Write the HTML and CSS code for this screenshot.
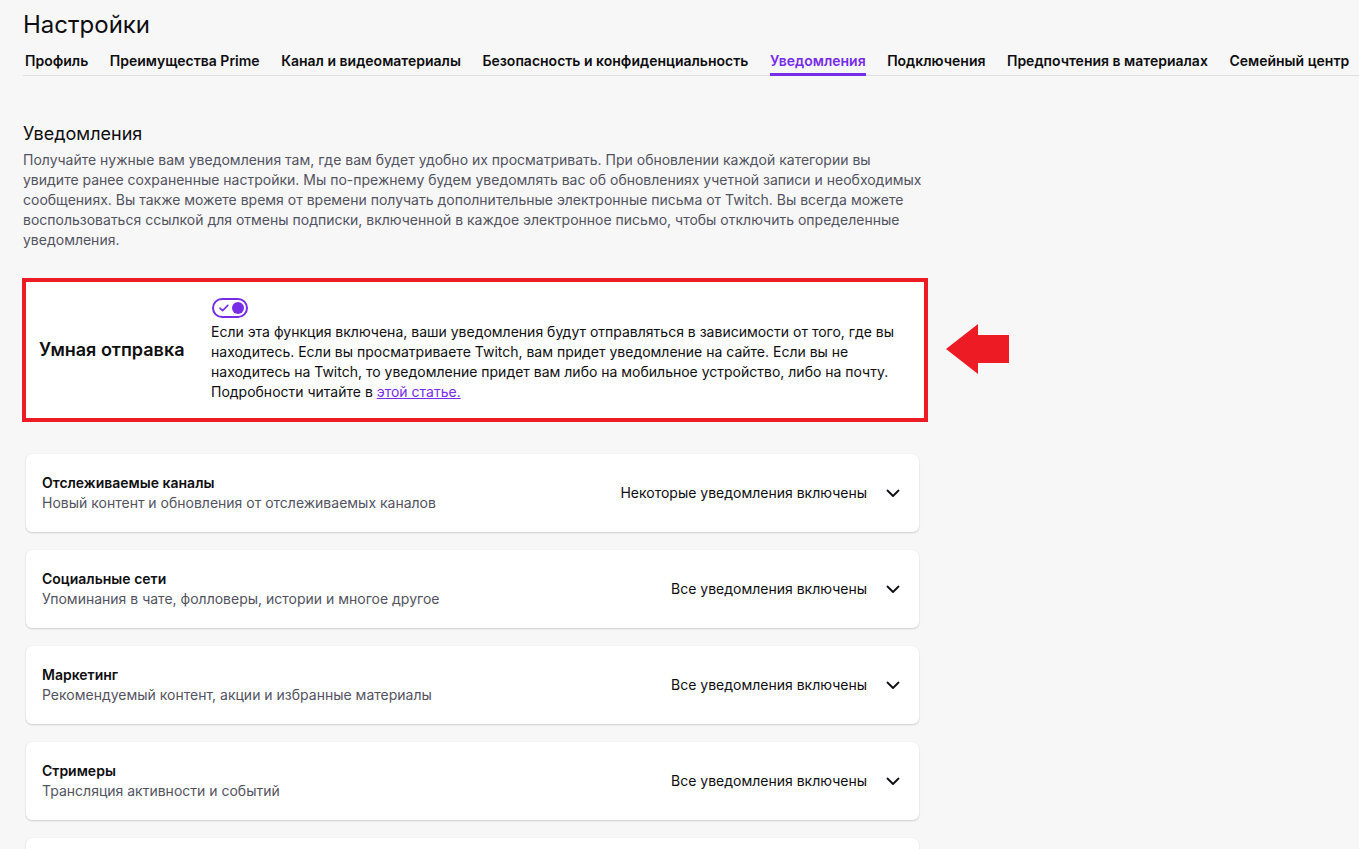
FILE: index.html
```html
<!DOCTYPE html>
<html lang="ru">
<head>
<meta charset="utf-8">
<title>Настройки</title>
<link rel="stylesheet" href="styles.css">
</head>
<body>
<div class="page">
  <h1 class="title">Настройки</h1>
  <nav class="tabs">
    <a class="tab">Профиль</a>
    <a class="tab">Преимущества Prime</a>
    <a class="tab">Канал и видеоматериалы</a>
    <a class="tab">Безопасность и конфиденциальность</a>
    <a class="tab active">Уведомления</a>
    <a class="tab">Подключения</a>
    <a class="tab">Предпочтения в материалах</a>
    <a class="tab">Семейный центр</a>
  </nav>

  <main class="content">
    <h2 class="section-title">Уведомления</h2>
    <p class="intro">Получайте нужные вам уведомления там, где вам будет удобно их просматривать. При обновлении каждой категории вы увидите ранее сохраненные настройки. Мы по-прежнему будем уведомлять вас об обновлениях учетной записи и необходимых сообщениях. Вы также можете время от времени получать дополнительные электронные письма от Twitch. Вы всегда можете воспользоваться ссылкой для отмены подписки, включенной в каждое электронное письмо, чтобы отключить определенные уведомления.</p>

    <div class="smart-wrap">
      <section class="smart">
        <div class="smart-label">Умная отправка</div>
        <div class="smart-body">
          <span class="toggle">
            <svg class="toggle-check" width="10" height="8" viewBox="0 0 10 8"><path d="M1 4.2 L3.6 6.6 L8.8 1.4" fill="none" stroke="#772ce8" stroke-width="1.6" stroke-linecap="round" stroke-linejoin="round"/></svg>
            <span class="toggle-knob"></span>
          </span>
          <p class="smart-text">Если эта функция включена, ваши уведомления будут отправляться в зависимости от того, где вы находитесь. Если вы просматриваете Twitch, вам придет уведомление на сайте. Если вы не находитесь на Twitch, то уведомление придет вам либо на мобильное устройство, либо на почту. Подробности читайте в <a class="link" href="#">этой статье.</a></p>
        </div>
      </section>
      <svg class="arrow" width="64" height="52" viewBox="0 0 64 52"><path d="M0 26 L32 1 L32 12 L63 12 L63 40 L32 40 L32 51 Z" fill="#ed1c24"/></svg>
    </div>

    <div class="cards">
      <div class="card">
        <div class="card-text">
          <div class="card-title">Отслеживаемые каналы</div>
          <div class="card-sub">Новый контент и обновления от отслеживаемых каналов</div>
        </div>
        <div class="card-status">Некоторые уведомления включены</div>
        <svg class="chev" width="20" height="20" viewBox="0 0 20 20"><path d="M4.5 7.5 L10 13 L15.5 7.5" fill="none" stroke="#0e0e10" stroke-width="1.8" stroke-linecap="round" stroke-linejoin="round"/></svg>
      </div>
      <div class="card">
        <div class="card-text">
          <div class="card-title">Социальные сети</div>
          <div class="card-sub">Упоминания в чате, фолловеры, истории и многое другое</div>
        </div>
        <div class="card-status">Все уведомления включены</div>
        <svg class="chev" width="20" height="20" viewBox="0 0 20 20"><path d="M4.5 7.5 L10 13 L15.5 7.5" fill="none" stroke="#0e0e10" stroke-width="1.8" stroke-linecap="round" stroke-linejoin="round"/></svg>
      </div>
      <div class="card">
        <div class="card-text">
          <div class="card-title">Маркетинг</div>
          <div class="card-sub">Рекомендуемый контент, акции и избранные материалы</div>
        </div>
        <div class="card-status">Все уведомления включены</div>
        <svg class="chev" width="20" height="20" viewBox="0 0 20 20"><path d="M4.5 7.5 L10 13 L15.5 7.5" fill="none" stroke="#0e0e10" stroke-width="1.8" stroke-linecap="round" stroke-linejoin="round"/></svg>
      </div>
      <div class="card">
        <div class="card-text">
          <div class="card-title">Стримеры</div>
          <div class="card-sub">Трансляция активности и событий</div>
        </div>
        <div class="card-status">Все уведомления включены</div>
        <svg class="chev" width="20" height="20" viewBox="0 0 20 20"><path d="M4.5 7.5 L10 13 L15.5 7.5" fill="none" stroke="#0e0e10" stroke-width="1.8" stroke-linecap="round" stroke-linejoin="round"/></svg>
      </div>
      <div class="card card-last"></div>
    </div>
  </main>
</div>
</body>
</html>
```

FILE: styles.css
```css
* { box-sizing: border-box; }
html, body {
  margin: 0;
  background: #f7f7f8;
  color: #0e0e10;
  font-family: Inter, "Noto Sans", "DejaVu Sans", sans-serif;
  overflow: hidden;
}
.page {
  padding-left: 23px;
}
.title {
  margin: 10px 0 0 0;
  font-size: 24px;
  line-height: 29px;
  font-weight: 400;
}
.tabs {
  display: flex;
  gap: 21.5px;
  margin-top: 12px;
  padding-left: 2px;
  border-bottom: 1px solid #dedee3;
  white-space: nowrap;
}
.tab {
  font-size: 14px;
  font-weight: 600;
  line-height: 20px;
  padding-bottom: 2px;
  border-bottom: 3px solid transparent;
  margin-bottom: -1px;
  color: #0e0e10;
}
.tab.active {
  color: #772ce8;
  border-bottom-color: #772ce8;
}
.content {
  width: 896px;
  padding-top: 46px;
}
.section-title {
  margin: 0;
  font-size: 18px;
  line-height: 24px;
  font-weight: 400;
}
.intro {
  margin: 4px 0 0 0;
  width: 906px;
  font-size: 14px;
  line-height: 20px;
  color: #53535f;
}
.smart-wrap {
  position: relative;
  margin-top: 28px;
  margin-left: -1px;
  width: 906px;
}
.smart {
  display: flex;
  align-items: center;
  background: #fff;
  border: 4px solid #ed1c24;
  padding: 16px 13px;
}
.smart-label {
  width: 172px;
  flex: none;
  font-size: 18px;
  font-weight: 600;
  line-height: 24px;
}
.smart-body {
  display: flex;
  flex-direction: column;
  align-items: flex-start;
  gap: 4px;
}
.toggle {
  position: relative;
  display: inline-flex;
  align-items: center;
  width: 36px;
  height: 20px;
  border: 2px solid #772ce8;
  border-radius: 10px;
  background: #fff;
  margin-left: 1px;
}
.toggle-check {
  position: absolute;
  left: 5px;
  top: 4px;
}
.toggle-knob {
  position: absolute;
  right: 2px;
  top: 2px;
  width: 12px;
  height: 12px;
  border-radius: 50%;
  background: #772ce8;
}
.smart-text {
  margin: 0;
  width: 700px;
  font-size: 14px;
  line-height: 20px;
}
.link {
  color: #772ce8;
  text-decoration: underline;
}
.arrow {
  position: absolute;
  left: 924px;
  top: 45px;
}
.cards {
  margin-top: 32px;
  padding-left: 3px;
  display: flex;
  flex-direction: column;
  gap: 18px;
}
.card {
  display: flex;
  align-items: center;
  background: #fff;
  border-radius: 6px;
  box-shadow: 0 1px 2px rgba(0, 0, 0, 0.16), 0 0 1px rgba(0, 0, 0, 0.08);
  padding: 19px 16px 19px 16px;
  height: 78px;
}
.card-text {
  flex: 1;
}
.card-title {
  font-size: 14px;
  font-weight: 600;
  line-height: 20px;
}
.card-sub {
  font-size: 14px;
  line-height: 20px;
  color: #53535f;
}
.card-status {
  font-size: 14px;
  line-height: 20px;
  margin-right: 16px;
}
.chev {
  flex: none;
}
```
